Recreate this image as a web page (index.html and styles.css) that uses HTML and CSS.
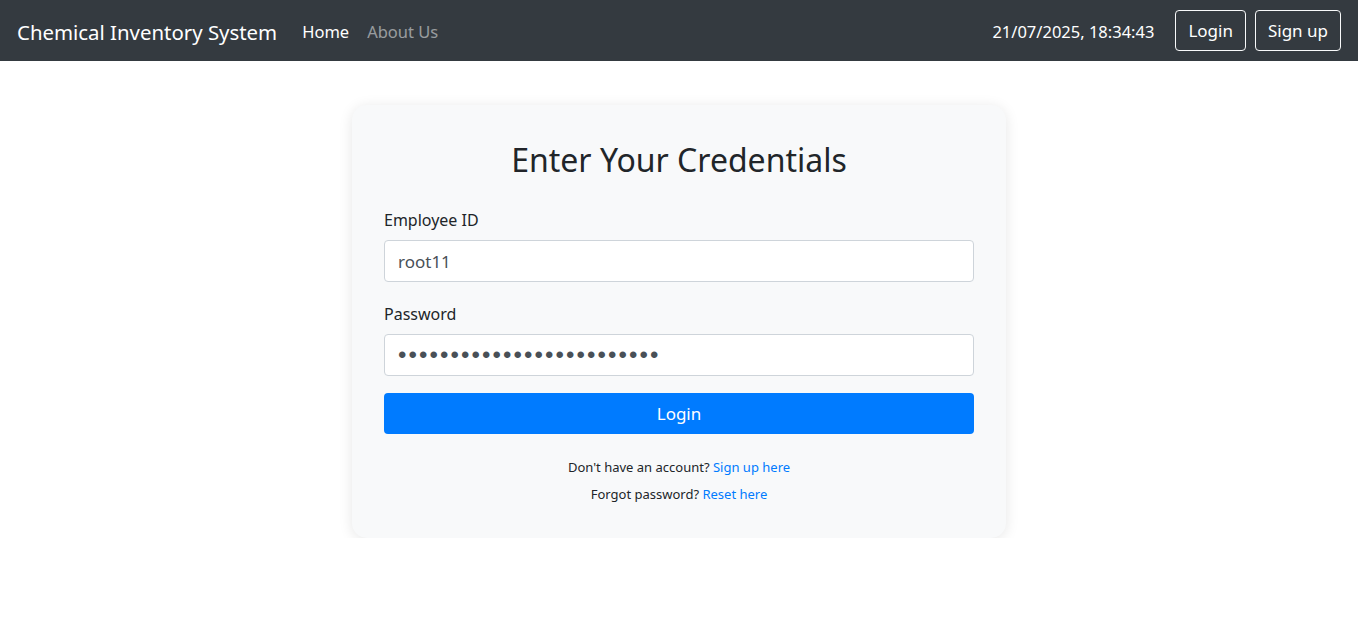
FILE: index.html
```html
<!DOCTYPE html>
<html lang="en">
<head>
<meta charset="utf-8">
<title>Chemical Inventory System</title>
<link rel="stylesheet" href="styles.css">
</head>
<body>
<nav class="navbar">
  <div class="nav-left">
    <a class="brand" href="#">Chemical Inventory System</a>
    <a class="nav-link active" href="#">Home</a>
    <a class="nav-link" href="#">About Us</a>
  </div>
  <div class="nav-right">
    <span class="clock">21/07/2025, 18:34:43</span>
    <a class="btn-outline" href="#">Login</a>
    <a class="btn-outline" href="#">Sign up</a>
  </div>
</nav>
<main class="main">
  <div class="card">
    <h2 class="title">Enter Your Credentials</h2>
    <form class="form">
      <label class="label" for="emp">Employee ID</label>
      <input class="input" id="emp" type="text" value="root11">
      <label class="label" for="pw">Password</label>
      <input class="input pw" id="pw" type="password" value="abcdefghijklmnopqrstuvwxy">
      <button class="btn-primary" type="button">Login</button>
    </form>
    <p class="note">Don't have an account? <a href="#">Sign up here</a></p>
    <p class="note">Forgot password? <a href="#">Reset here</a></p>
  </div>
</main>
</body>
</html>
```
FILE: styles.css
```css
* { box-sizing: border-box; }
html, body { margin: 0; padding: 0; }
body {
  font-family: "Noto Sans", "Open Sans", sans-serif;
  color: #212529;
  background: #fff;
  font-size: 16px;
}
a { text-decoration: none; }
.navbar {
  height: 61px;
  background: #343a40;
  display: flex;
  align-items: center;
  justify-content: space-between;
  padding: 0 17px 0 17px;
}
.nav-left { display: flex; align-items: center; padding-top: 2px; }
.brand {
  color: #fff;
  font-size: 20.4px;
  margin-right: 25px;
}
.nav-link {
  color: rgba(255,255,255,0.5);
  font-size: 16.5px;
  margin-right: 18px;
}
.nav-link.active { color: #fff; }
.nav-right { display: flex; align-items: center; }
.clock { color: #fff; font-size: 16.5px; margin-right: 12px; padding-top: 2px; }
.btn-outline {
  color: #fff;
  border: 1px solid #f8f9fa;
  border-radius: 4px;
  height: 41px;
  padding: 0 12px;
  display: flex;
  align-items: center;
  font-size: 17px;
  margin-left: 9px;
}
.main { display: flex; justify-content: center; padding-top: 44px; }
.card {
  width: 654px;
  background: #f8f9fa;
  border-radius: 15px;
  box-shadow: 0 2px 14px rgba(0,0,0,0.1);
  padding: 32px 32px 27px;
}
.title {
  margin: 0 0 25px;
  text-align: center;
  font-weight: 400;
  font-size: 32px;
  line-height: 46px;
  color: #212529;
}
.form { display: flex; flex-direction: column; }
.label { font-size: 16px; line-height: 24px; margin-bottom: 8px; }
.input {
  height: 42px;
  border: 1px solid #ced4da;
  border-radius: 4px;
  background: #fff;
  font-family: inherit;
  font-size: 17px;
  color: #495057;
  padding: 0 13px;
  margin-bottom: 20px;
}
.input.pw {
  margin-bottom: 17px;
  font-family: "Liberation Sans", sans-serif;
  font-size: 24px;
  letter-spacing: 2.1px;
}
.btn-primary {
  height: 41px;
  background: #007bff;
  border: none;
  border-radius: 4px;
  color: #fff;
  font-family: inherit;
  font-size: 17px;
  margin-bottom: 23px;
}
.note {
  margin: 0 0 6px;
  text-align: center;
  font-size: 13px;
  line-height: 21px;
  color: #212529;
}
.note a { color: #007bff; }
```
